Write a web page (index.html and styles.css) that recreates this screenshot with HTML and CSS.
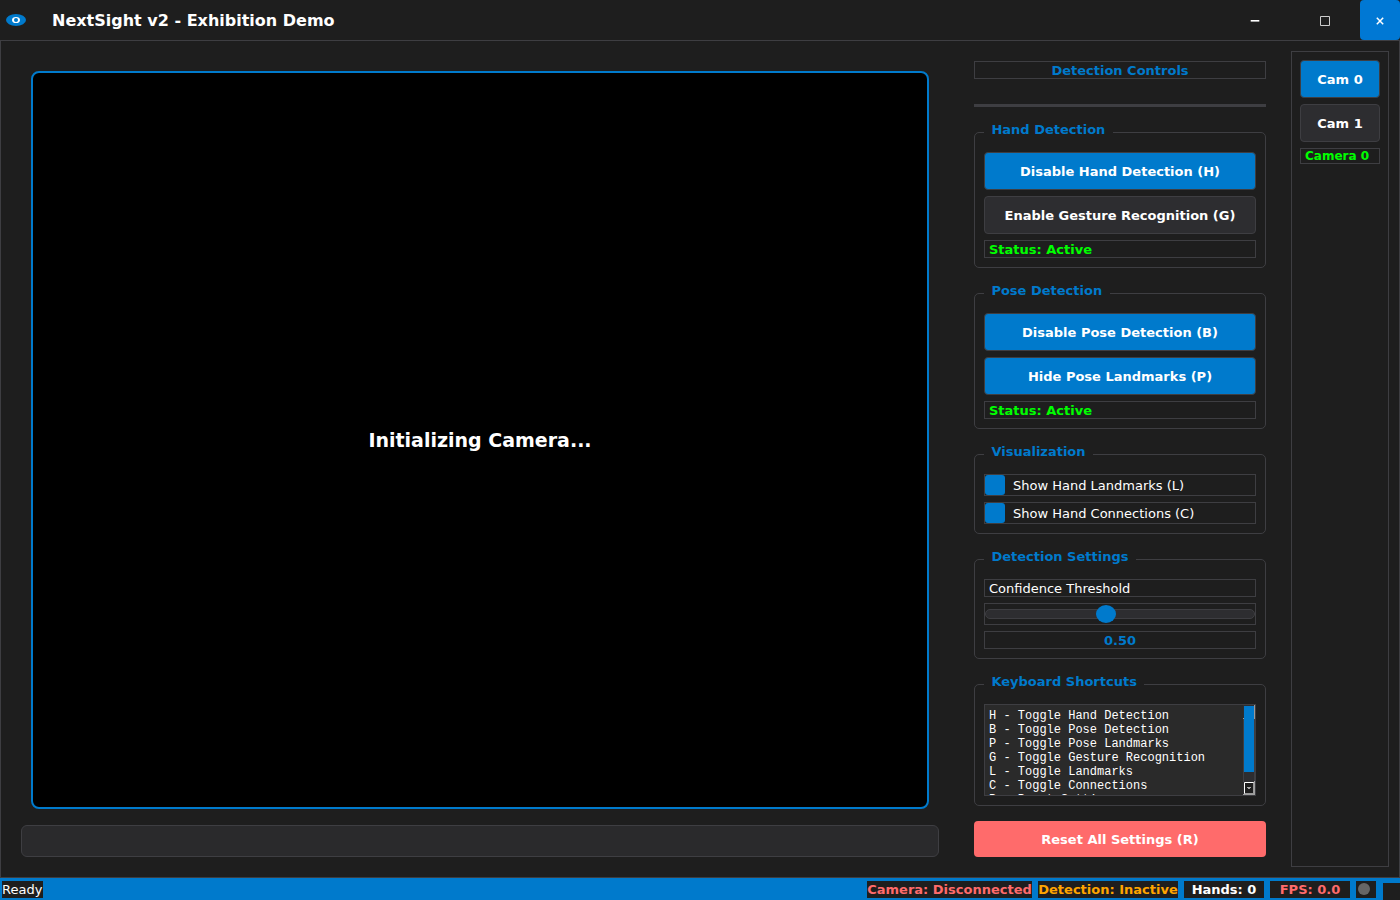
FILE: index.html
```
<!DOCTYPE html>
<html lang="en">
<head>
<meta charset="utf-8">
<title>NextSight v2 - Exhibition Demo</title>
<link rel="stylesheet" href="styles.css">
</head>
<body>
<div class="window">
  <header class="titlebar">
    <svg class="logo" width="20" height="12" viewBox="0 0 20 12"><ellipse cx="10" cy="6" rx="10" ry="6" fill="#007acc"/><ellipse cx="10" cy="6" rx="4" ry="3.100" fill="#fff"/><ellipse cx="10" cy="6" rx="2" ry="1.900" fill="#007acc"/></svg>
    <h1 class="title">NextSight v2 - Exhibition Demo</h1>
    <div class="minimize"><svg width="10" height="10" viewBox="0 0 10 10"><path d="M.7 5.800h8.600" stroke="#fff" stroke-width="1.600"/></svg></div>
    <div class="maximize"><svg width="10" height="12" viewBox="0 0 10 12"><path d="M.5 1.500h9v9h-9z" fill="none" stroke="#ccc"/></svg></div>
    <div class="close"><svg width="8" height="8" viewBox="0 0 8 8"><path d="M.8.8l6.400 6.400M7.200.8L.8 7.200" stroke="#fff" stroke-width="1.500"/></svg></div>
  </header>
  <main class="body">
    <section class="stage">
      <div class="video">Initializing Camera...</div>
      <div class="infobar"></div>
    </section>
    <section class="controls">
      <div class="field heading">Detection Controls</div>
      <div class="rule"></div>
      <div class="group">
        <span class="legend w-hand">Hand Detection</span>
        <div class="button on">Disable Hand Detection (H)</div>
        <div class="button">Enable Gesture Recognition (G)</div>
        <div class="field status">Status: Active</div>
      </div>
      <div class="group">
        <span class="legend w-pose">Pose Detection</span>
        <div class="button on">Disable Pose Detection (B)</div>
        <div class="button on">Hide Pose Landmarks (P)</div>
        <div class="field status">Status: Active</div>
      </div>
      <div class="group">
        <span class="legend w-vis">Visualization</span>
        <div class="check"><i class="box"></i><span class="check-text">Show Hand Landmarks (L)</span></div>
        <div class="check"><i class="box"></i><span class="check-text">Show Hand Connections (C)</span></div>
      </div>
      <div class="group">
        <span class="legend w-set">Detection Settings</span>
        <div class="field">Confidence Threshold</div>
        <div class="slider"><div class="groove"></div><i class="knob"></i></div>
        <div class="field value">0.50</div>
      </div>
      <div class="group">
        <span class="legend w-key">Keyboard Shortcuts</span>
        <div class="shortcuts">
          <pre class="lines">H - Toggle Hand Detection
B - Toggle Pose Detection
P - Toggle Pose Landmarks
G - Toggle Gesture Recognition
L - Toggle Landmarks
C - Toggle Connections
R - Reset Settings</pre>
          <svg class="scroll" width="12" height="90" viewBox="0 0 12 90"><path fill="#2d2d30" d="M0 0h12v90H0z"/><path fill="#3e3e42" d="M0 14h1v63H0zM11 14h1v63h-1z"/><path fill="#9a9a9a" d="M11 0h1v14h-1zM0 13h1v1H0z"/><path fill="#007acc" d="M1 1h10v66H1z"/><path fill="#a0a0a0" d="M11 76h1v14H0v-1h11z"/><path fill="#1e1e1e" stroke="#fff" d="M1.500 77.500h9v11h-9z"/><path fill="#999" d="M10 78h1v11H2v-1h8z"/><path fill="#aaa" d="M4 82h4v1H4zM5 83h2v1H5z"/></svg>
        </div>
      </div>
      <div class="reset">Reset All Settings (R)</div>
    </section>
    <aside class="cameras">
      <div class="button on">Cam 0</div>
      <div class="button">Cam 1</div>
      <div class="field current">Camera 0</div>
    </aside>
  </main>
  <footer class="statusbar">
    <span class="chip ready">Ready</span>
    <span class="chip camera">Camera: Disconnected</span>
    <span class="chip detection">Detection: Inactive</span>
    <span class="chip hands">Hands: 0</span>
    <span class="chip fps">FPS: 0.0</span>
    <span class="chip lamp"><i class="dot"></i></span>
    <i class="grip"></i>
  </footer>
</div>
</body>
</html>
```
FILE: styles.css
```
* { box-sizing: border-box; }
body { margin: 0; background: #1e1e1e; color: #fff; font: 13px/16px "DejaVu Sans", sans-serif; }
.window { width: 1400px; height: 900px; display: flex; flex-direction: column; overflow: hidden; white-space: nowrap; }

.titlebar { height: 40px; display: flex; align-items: center; padding-left: 6px; }
.logo { display: block; }
.title { margin: 0 auto 0 26px; padding-top: 2px; font-size: 16px; line-height: 20px; font-weight: bold; }
.minimize, .maximize, .close { display: flex; align-items: center; justify-content: center; height: 40px; }
.minimize { width: 70px; }
.maximize { width: 70px; padding-top: 2px; }
.close { width: 40px; padding-top: 2px; background: #0078d4; border-radius: 4px; }
.minimize svg, .maximize svg, .close svg { display: block; }

.body { height: 838px; display: flex; align-items: flex-start; border: 1px solid #3e3e42; padding: 10px 10px 10px 20px; }
.stage { width: 918px; padding-top: 20px; }
.video { height: 738px; margin: 0 10px 16px; border: 2px solid #007acc; border-radius: 8px; background: #000; display: flex; align-items: center; justify-content: center; font-size: 19px; font-weight: bold; }
.infobar { height: 32px; border: 1px solid #3e3e42; border-radius: 6px; background: #2a2a2c; }

.controls { width: 292px; margin-left: 35px; padding-top: 10px; }
.field { height: 18px; border: 1px solid #3e3e42; padding: 1px 4px 0; color: #fff; }
.heading { text-align: center; font-weight: bold; color: #007acc; }
.rule { height: 3px; margin: 25px 0; background: #3e3e42; }
.group { position: relative; margin-bottom: 25px; border: 1px solid #3e3e42; border-radius: 5px; padding: 19px 9px 9px; display: flex; flex-direction: column; gap: 6px; }
.legend { position: absolute; left: 9px; top: -11px; padding-left: 7.4px; background: #1e1e1e; color: #007acc; font-weight: bold; }
.w-hand { width: 129px; }
.w-pose { width: 126px; }
.w-vis { width: 109px; }
.w-set { width: 152px; }
.w-key { width: 160px; }
.button { height: 38px; padding-top: 2px; border: 1px solid #3e3e42; border-radius: 4px; background: #2d2d30; display: flex; align-items: center; justify-content: center; font-weight: bold; }
.on { background: #007acc; }
.status, .current { color: #0f0; font-weight: bold; }
.value { color: #007acc; font-weight: bold; text-align: center; }
.check { height: 22px; border: 1px solid #3e3e42; display: flex; align-items: center; gap: 8px; }
.check-text { padding-top: 2px; }
.box { width: 20px; height: 20px; border-radius: 3px; background: #007acc; }
.slider { position: relative; height: 22px; border: 1px solid #3e3e42; padding-top: 5px; }
.groove { height: 10px; border: 1px solid #3e3e42; border-radius: 5px; background: #2d2d30; }
.knob { position: absolute; left: 111px; top: 1px; width: 20px; height: 18px; border-radius: 50%; background: #007acc; }
.shortcuts { height: 92px; border: 1px solid #3e3e42; background: #2a2a2a; display: flex; justify-content: space-between; overflow: hidden; }
.lines { margin: 0; padding: 4px; font: 12px/14px "Liberation Mono", monospace; color: #fff; }
.scroll { display: block; flex: none; }
.reset { height: 36px; margin-top: -10px; padding-top: 2px; border-radius: 4px; background: #ff6b6b; display: flex; align-items: center; justify-content: center; font-weight: bold; }

.cameras { width: 98px; height: 816px; margin-left: 25px; border: 1px solid #3e3e42; padding: 8px; display: flex; flex-direction: column; gap: 6px; }
.current { height: 16px; padding-top: 0; font-size: 12px; line-height: 14px; }

.statusbar { height: 22px; background: #007acc; display: flex; align-items: center; gap: 6px; padding-left: 2px; }
.chip { height: 17px; margin-top: 1px; line-height: 17px; background: #1e1e1e; font-weight: bold; text-align: center; }
.ready { width: 41px; margin-right: auto; font-weight: normal; text-align: left; }
.camera { width: 165px; color: #ff6b6b; }
.detection { width: 140px; color: #ffa500; }
.hands { width: 80px; }
.fps { width: 80px; color: #ff6b6b; }
.lamp { width: 20px; padding: 2px; }
.dot { display: block; width: 12px; height: 12px; border-radius: 50%; background: #666; }
.grip { width: 17px; height: 17px; margin-left: 1px; align-self: flex-end; background: #1e1e1e; }
```
